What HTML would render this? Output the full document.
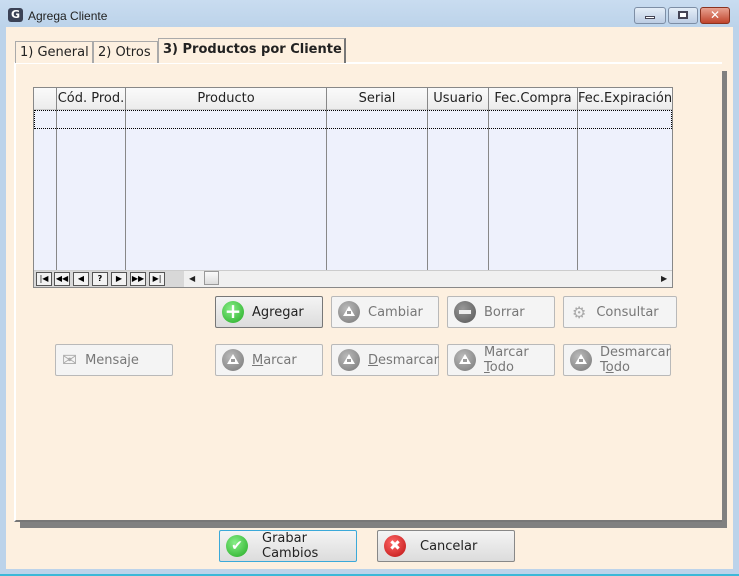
<!DOCTYPE html>
<html><head><meta charset="utf-8"><style>
*{box-sizing:border-box;margin:0;padding:0}
body{width:739px;height:576px;position:relative;overflow:hidden;background:#bcd3ea;font-family:"DejaVu Sans","Liberation Sans",sans-serif;font-size:13px;color:#222}
.a{position:absolute}
.client{left:6px;top:27px;width:727px;height:542px;background:#fdf0e0}
.title{left:28px;top:9px;font-size:12px;color:#222;font-family:"Liberation Sans",sans-serif}
.tb{top:7px;height:17px;border:1px solid #7d8ea5;border-radius:3px;background:linear-gradient(#e4edf7,#bccde3)}
.tab{top:41px;height:22px;background:#fdf0e0;border:1px solid #aaa;border-bottom:none;padding:3px 4px;font-size:13px;white-space:nowrap}
.panel{left:14px;top:62px;width:708px;height:460px;border-left:2px solid #fff;border-top:2px solid #fff;border-bottom:2px solid #777;background:#fdf0e0}
.grid{left:33px;top:87px;width:640px;height:201px;border:1px solid #888;background:#eef1fc;overflow:hidden}
.hdr{position:absolute;top:0;left:0;right:0;height:22px;background:linear-gradient(#fafafa,#ececec);border-bottom:1px solid #ccc}
.col{position:absolute;top:0;height:182px;border-left:1px solid #888}
.ht{position:absolute;top:3px;font-size:13px;color:#222;text-align:center}
.btn{height:32px;border:1px solid #b9b9b9;border-radius:2px;background:#f4f4f4;color:#777;font-size:13px;display:flex;align-items:center}
.ic{width:22px;height:22px;border-radius:50%;margin:0 8px 0 6px;flex:none;background:radial-gradient(circle at 40% 35%,#bbb,#777);position:relative;color:#fff;font-weight:bold;text-align:center;line-height:22px;font-size:14px}
.tri::after{content:"";position:absolute;left:5px;top:5px;border-left:6px solid transparent;border-right:6px solid transparent;border-bottom:10px solid #fff}
.tri::before{content:"";position:absolute;left:9px;top:10px;width:4px;height:3px;background:#999;z-index:2}
.nb{top:272px;width:16px;height:14px;border:1px solid #555;background:#f2f2f2;font-size:8px;text-align:center;line-height:12px;color:#000}
</style></head><body>
<div class="a" style="left:0;top:0;width:739px;height:27px;background:linear-gradient(#c9dcf0,#bcd3ea)"></div>
<div class="a" style="left:8px;top:8px;width:15px;height:14px;border-radius:3px;background:#3b4256;color:#fff;font-weight:bold;font-size:11px;text-align:center;line-height:14px">G</div>
<div class="a title">Agrega Cliente</div>
<div class="a tb" style="left:634px;width:32px"><div class="a" style="left:10px;top:8px;width:10px;height:3px;background:#fff;border:1px solid #445"></div></div>
<div class="a tb" style="left:668px;width:30px"><div class="a" style="left:9px;top:3px;width:10px;height:8px;border:2px solid #445;background:#fff"></div></div>
<div class="a tb" style="left:700px;width:30px;background:linear-gradient(#e8a291,#c0442c);border-color:#8a3320;color:#fff;text-align:center;font-weight:bold;font-size:12px;line-height:15px">✕</div>
<div class="a client"></div>
<div class="a" style="left:20px;top:522px;width:707px;height:6px;background:#808080"></div>
<div class="a" style="left:720px;top:71px;width:7px;height:457px;background:#808080"></div>
<div class="a panel"></div>
<div class="a tab" style="left:15px;width:78px">1) General</div>
<div class="a tab" style="left:93px;width:65px">2) Otros</div>
<div class="a tab" style="left:158px;top:38px;height:25px;width:188px;font-weight:bold;border-right:2px solid #777;border-bottom:none">3) Productos por Cliente</div>
<div class="a grid">
 <div class="hdr"></div>
 <div class="col" style="left:22px"></div><div class="col" style="left:91px"></div><div class="col" style="left:292px"></div><div class="col" style="left:393px"></div><div class="col" style="left:454px"></div><div class="col" style="left:543px"></div>
 <div class="ht" style="left:22px;width:70px">Cód. Prod.</div>
 <div class="ht" style="left:92px;width:200px">Producto</div>
 <div class="ht" style="left:293px;width:100px">Serial</div>
 <div class="ht" style="left:394px;width:60px">Usuario</div>
 <div class="ht" style="left:455px;width:88px">Fec.Compra</div>
 <div class="ht" style="left:544px;width:100px;text-align:left">Fec.Expiración</div>
 <div class="a" style="left:0;top:22px;width:638px;height:19px;border:1px dotted #000"></div>
 <div class="a" style="left:0;top:182px;width:638px;height:17px;background:#f0f0f0;border-top:1px solid #ccc"></div>
 <div class="a" style="left:155px;top:186px;font-size:8px">◀</div>
 <div class="a" style="left:170px;top:183px;width:15px;height:14px;border:1px solid #999;background:linear-gradient(#fafafa,#ddd)"></div>
 <div class="a" style="left:627px;top:186px;font-size:8px">▶</div>
</div>
<div class="a" style="left:34px;top:271px;width:150px;height:16px;background:#d8d8d8"></div>
<div class="a nb" style="left:36px">|◀</div><div class="a nb" style="left:54px">◀◀</div><div class="a nb" style="left:73px">◀</div><div class="a nb" style="left:92px;font-weight:bold">?</div><div class="a nb" style="left:111px">▶</div><div class="a nb" style="left:130px">▶▶</div><div class="a nb" style="left:149px">▶|</div>

<div class="a btn" style="left:215px;top:296px;width:108px;border-color:#777;background:linear-gradient(#f4f4f4,#dcdcdc);color:#222"><span class="ic" style="background:radial-gradient(circle at 40% 35%,#8e8,#2a2);font-size:20px;line-height:21px">+</span>Agregar</div>
<div class="a btn" style="left:331px;top:296px;width:108px"><span class="ic tri"></span>Cambiar</div>
<div class="a btn" style="left:447px;top:296px;width:108px"><span class="ic" style="background:radial-gradient(circle at 40% 35%,#999,#555)"><span class="a" style="left:5px;top:9px;width:12px;height:4px;background:#eee"></span></span>Borrar</div>
<div class="a btn" style="left:563px;top:296px;width:114px"><span style="margin:0 10px 0 8px;color:#aaa;font-size:16px">⚙</span>Consultar</div>
<div class="a btn" style="left:55px;top:344px;width:118px"><span style="margin:0 8px 0 6px;color:#aaa;font-size:18px">✉</span>Mensaje</div>
<div class="a btn" style="left:215px;top:344px;width:108px"><span class="ic tri"></span><u>M</u>arcar</div>
<div class="a btn" style="left:331px;top:344px;width:108px"><span class="ic tri"></span><u>D</u>esmarcar</div>
<div class="a btn" style="left:447px;top:344px;width:108px;line-height:15px"><span class="ic tri"></span><span>Marcar<br><u>T</u>odo</span></div>
<div class="a btn" style="left:563px;top:344px;width:108px;line-height:15px"><span class="ic tri"></span><span>Desmarcar<br>T<u>o</u>do</span></div>

<div class="a btn" style="left:219px;top:530px;width:138px;height:32px;border:1px solid #3ba9d9;background:linear-gradient(#f4f4f4,#dcdcdc);color:#222;line-height:15px"><span class="ic" style="background:radial-gradient(circle at 40% 35%,#8e8,#2a2);margin-right:14px">✔</span><span>Grabar<br>Cambios</span></div>
<div class="a btn" style="left:377px;top:530px;width:138px;height:32px;border-color:#888;background:linear-gradient(#f4f4f4,#dcdcdc);color:#222"><span class="ic" style="background:radial-gradient(circle at 40% 35%,#f66,#b11);margin-right:14px">✖</span>Cancelar</div>
<div class="a" style="left:0;top:574px;width:739px;height:2px;background:#3cb8d8"></div>
</body></html>
